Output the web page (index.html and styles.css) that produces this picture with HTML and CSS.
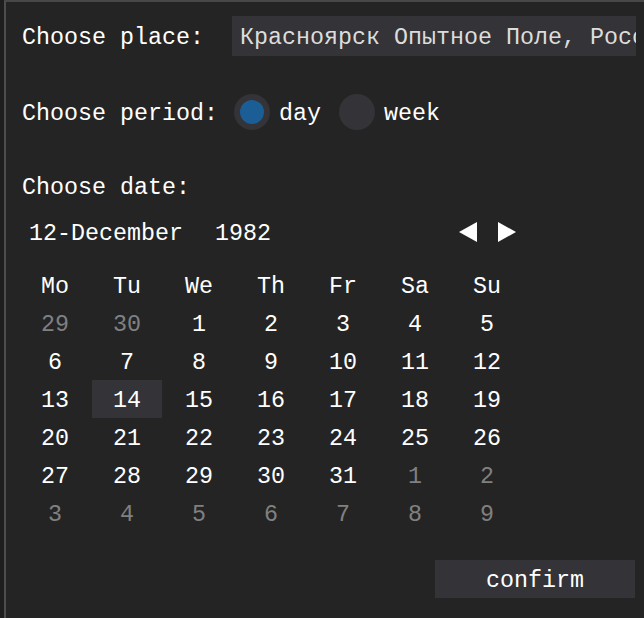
FILE: index.html
```html
<!DOCTYPE html>
<html>
<head>
<meta charset="utf-8">
<link rel="stylesheet" href="styles.css">
</head>
<body>
<div class="window">
  <div class="row row-place">
    <span class="t label-place">Choose place:</span>
    <div class="input"><span class="t input-text">Красноярск Опытное Поле, Россия</span></div>
  </div>
  <div class="row row-period">
    <span class="t label-period">Choose period:</span>
    <span class="radio on"><span class="dot"></span></span>
    <span class="t radio-label">day</span>
    <span class="radio"></span>
    <span class="t radio-label">week</span>
  </div>
  <div class="row row-datelabel">
    <span class="t">Choose date:</span>
  </div>
  <div class="row row-date">
    <span class="t date-day">12-December</span>
    <span class="t date-year">1982</span>
    <svg class="arrow arrow-left" width="19" height="21" viewBox="0 0 19 21"><polygon points="18,0 18,20 0,10" fill="#ffffff"/></svg>
    <svg class="arrow arrow-right" width="19" height="21" viewBox="0 0 19 21"><polygon points="0,0 0,20 18,10" fill="#ffffff"/></svg>
  </div>
  <div class="cal">
    <div class="c"><span class="t">Mo</span></div>
    <div class="c"><span class="t">Tu</span></div>
    <div class="c"><span class="t">We</span></div>
    <div class="c"><span class="t">Th</span></div>
    <div class="c"><span class="t">Fr</span></div>
    <div class="c"><span class="t">Sa</span></div>
    <div class="c"><span class="t">Su</span></div>

    <div class="c off"><span class="t">29</span></div>
    <div class="c off"><span class="t">30</span></div>
    <div class="c"><span class="t">1</span></div>
    <div class="c"><span class="t">2</span></div>
    <div class="c"><span class="t">3</span></div>
    <div class="c"><span class="t">4</span></div>
    <div class="c"><span class="t">5</span></div>

    <div class="c"><span class="t">6</span></div>
    <div class="c"><span class="t">7</span></div>
    <div class="c"><span class="t">8</span></div>
    <div class="c"><span class="t">9</span></div>
    <div class="c"><span class="t">10</span></div>
    <div class="c"><span class="t">11</span></div>
    <div class="c"><span class="t">12</span></div>

    <div class="c"><span class="t">13</span></div>
    <div class="c sel"><span class="t">14</span></div>
    <div class="c"><span class="t">15</span></div>
    <div class="c"><span class="t">16</span></div>
    <div class="c"><span class="t">17</span></div>
    <div class="c"><span class="t">18</span></div>
    <div class="c"><span class="t">19</span></div>

    <div class="c"><span class="t">20</span></div>
    <div class="c"><span class="t">21</span></div>
    <div class="c"><span class="t">22</span></div>
    <div class="c"><span class="t">23</span></div>
    <div class="c"><span class="t">24</span></div>
    <div class="c"><span class="t">25</span></div>
    <div class="c"><span class="t">26</span></div>

    <div class="c"><span class="t">27</span></div>
    <div class="c"><span class="t">28</span></div>
    <div class="c"><span class="t">29</span></div>
    <div class="c"><span class="t">30</span></div>
    <div class="c"><span class="t">31</span></div>
    <div class="c off"><span class="t">1</span></div>
    <div class="c off"><span class="t">2</span></div>

    <div class="c off"><span class="t">3</span></div>
    <div class="c off"><span class="t">4</span></div>
    <div class="c off"><span class="t">5</span></div>
    <div class="c off"><span class="t">6</span></div>
    <div class="c off"><span class="t">7</span></div>
    <div class="c off"><span class="t">8</span></div>
    <div class="c off"><span class="t">9</span></div>
  </div>
  <div class="row row-confirm">
    <div class="button"><span class="t">confirm</span></div>
  </div>
</div>
</body>
</html>
```
FILE: styles.css
```css
html, body {
  margin: 0;
  padding: 0;
}
body {
  background: #1e1e1e;
  width: 644px;
  height: 618px;
  overflow: hidden;
  font-family: "Liberation Mono", "DejaVu Sans Mono", monospace;
  font-size: 23.33px;
  color: #ffffff;
}
.window {
  margin-left: 4px;
  height: 616px;
  border-top: 2px solid #474747;
  border-left: 2px solid #4d4d4d;
  background: #242424;
  padding: 14px 8px 0 16px;
  box-sizing: content-box;
}
.t {
  display: block;
  line-height: 32px;
  padding-top: 3px;
  white-space: pre;
}
.row {
  display: flex;
  align-items: center;
}
.row-place {
  height: 40px;
}
.label-place {
  margin-right: 28px;
}
.input {
  width: 404px;
  height: 40px;
  background: #333338;
  display: flex;
  align-items: center;
  overflow: hidden;
  padding-left: 8px;
  box-sizing: border-box;
}
.input-text {
  color: #dcdcdc;
}
.row-period {
  height: 36px;
  margin-top: 38px;
}
.label-period {
  margin-right: 16px;
}
.radio {
  width: 36px;
  height: 36px;
  border-radius: 50%;
  background: #333338;
  display: flex;
  align-items: center;
  justify-content: center;
  flex: none;
  margin-right: 9px;
}
.radio .dot {
  width: 24px;
  height: 24px;
  border-radius: 50%;
  background: #1b5e95;
}
.radio-label {
  margin-right: 18px;
}
.row-datelabel {
  height: 38px;
  margin-top: 37px;
}
.row-date {
  height: 38px;
  margin-top: 8px;
  padding-left: 7px;
}
.date-year {
  margin-left: 32px;
}
.arrow {
  display: block;
  flex: none;
}
.arrow-left {
  margin-left: 188px;
}
.arrow-right {
  margin-left: 20px;
}
.cal {
  margin-top: 15px;
  margin-left: -2px;
  display: grid;
  grid-template-columns: repeat(7, 70px);
  column-gap: 2px;
  grid-auto-rows: 38px;
}
.c {
  display: flex;
  align-items: center;
  justify-content: center;
}
.c.off {
  color: #808080;
}
.c.sel {
  background: #333338;
}
.row-confirm {
  margin-top: 28px;
  justify-content: flex-end;
}
.button {
  width: 200px;
  height: 38px;
  margin-right: 1px;
  background: #333338;
  display: flex;
  align-items: center;
  justify-content: center;
}
```
